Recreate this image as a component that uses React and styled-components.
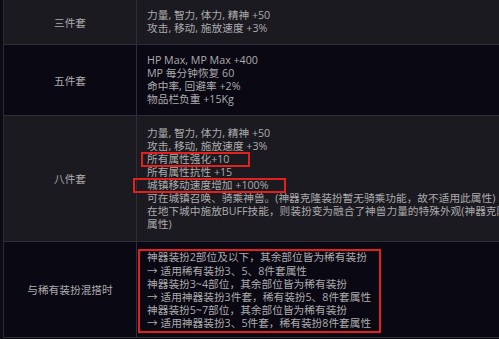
import React from "react";
import styled, { createGlobalStyle } from "styled-components";

const Global = createGlobalStyle`
  html, body { margin: 0; padding: 0; background: #0c0a13; overflow: hidden; }
  body { font-family: "Open Sans", "Noto Sans CJK SC", sans-serif; }
`;

const Table = styled.div`
  margin-left: 3px;
  width: 640px;
  border-left: 1px solid #2c2b35;
  display: flex;
  flex-direction: column;
`;

const Row = styled.div`
  display: grid;
  grid-template-columns: 133px 1fr;
  height: ${(p) => p.$h}px;
  background: ${(p) => (p.$dark ? "#0a0813" : "#1b1a20")};
  border-bottom: 1px solid #2e2d38;
`;

const Label = styled.div`
  display: flex;
  align-items: center;
  justify-content: center;
  border-right: 1px solid #2e2d38;
  color: #acacac;
  font-size: 10.7px;
`;

const Content = styled.div`
  display: flex;
  flex-direction: column;
  justify-content: center;
  padding: ${(p) => p.$pad || "0 0 0 10px"};
  color: #acacac;
  font-size: 10.7px;
  line-height: 13px;
`;

const Line = styled.div`
  position: relative;
  white-space: nowrap;
`;

const Mark = styled.span`
  position: absolute;
  top: -1px;
  height: 15px;
  left: ${(p) => p.$l}px;
  width: ${(p) => p.$w}px;
  border: 2px solid #e0211d;
  box-sizing: border-box;
  pointer-events: none;
`;

const Box = styled.div`
  width: 243px;
  box-sizing: border-box;
  border: 2px solid #e0211d;
  padding: 0 0 0 7px;
  line-height: 13.2px;
`;

export default function App() {
  return (
    <>
      <Global />
      <Table>
        <Row $h={44}>
          <Label>三件套</Label>
          <Content>
            <Line>力量, 智力, 体力, 精神 +50</Line>
            <Line>攻击, 移动, 施放速度 +3%</Line>
          </Content>
        </Row>
        <Row $h={70} $dark>
          <Label>五件套</Label>
          <Content>
            <Line>HP Max, MP Max +400</Line>
            <Line>MP 每分钟恢复 60</Line>
            <Line>命中率, 回避率 +2%</Line>
            <Line>物品栏负重 +15Kg</Line>
          </Content>
        </Row>
        <Row $h={125}>
          <Label>八件套</Label>
          <Content>
            <Line>力量, 智力, 体力, 精神 +50</Line>
            <Line>攻击, 移动, 施放速度 +3%</Line>
            <Line>
              所有属性强化+10
              <Mark $l={-6} $w={109} />
            </Line>
            <Line>所有属性抗性 +15</Line>
            <Line>
              城镇移动速度增加 +100%
              <Mark $l={-14} $w={153} />
            </Line>
            <Line>可在城镇召唤、骑乘神兽。(神器克隆装扮暂无骑乘功能，故不适用此属性)</Line>
            <Line>在地下城中施放BUFF技能，则装扮变为融合了神兽力量的特殊外观(神器克隆装扮不适用此</Line>
            <Line>属性)</Line>
          </Content>
        </Row>
        <Row $h={95} $dark>
          <Label>与稀有装扮混搭时</Label>
          <Content $pad="3px 0 0 1px">
            <Box>
              <Line>神器装扮2部位及以下，其余部位皆为稀有装扮</Line>
              <Line>→ 适用稀有装扮3、5、8件套属性</Line>
              <Line>神器装扮3~4部位，其余部位皆为稀有装扮</Line>
              <Line>→ 适用神器装扮3件套，稀有装扮5、8件套属性</Line>
              <Line>神器装扮5~7部位，其余部位皆为稀有装扮</Line>
              <Line>→ 适用神器装扮3、5件套，稀有装扮8件套属性</Line>
            </Box>
          </Content>
        </Row>
      </Table>
    </>
  );
}
